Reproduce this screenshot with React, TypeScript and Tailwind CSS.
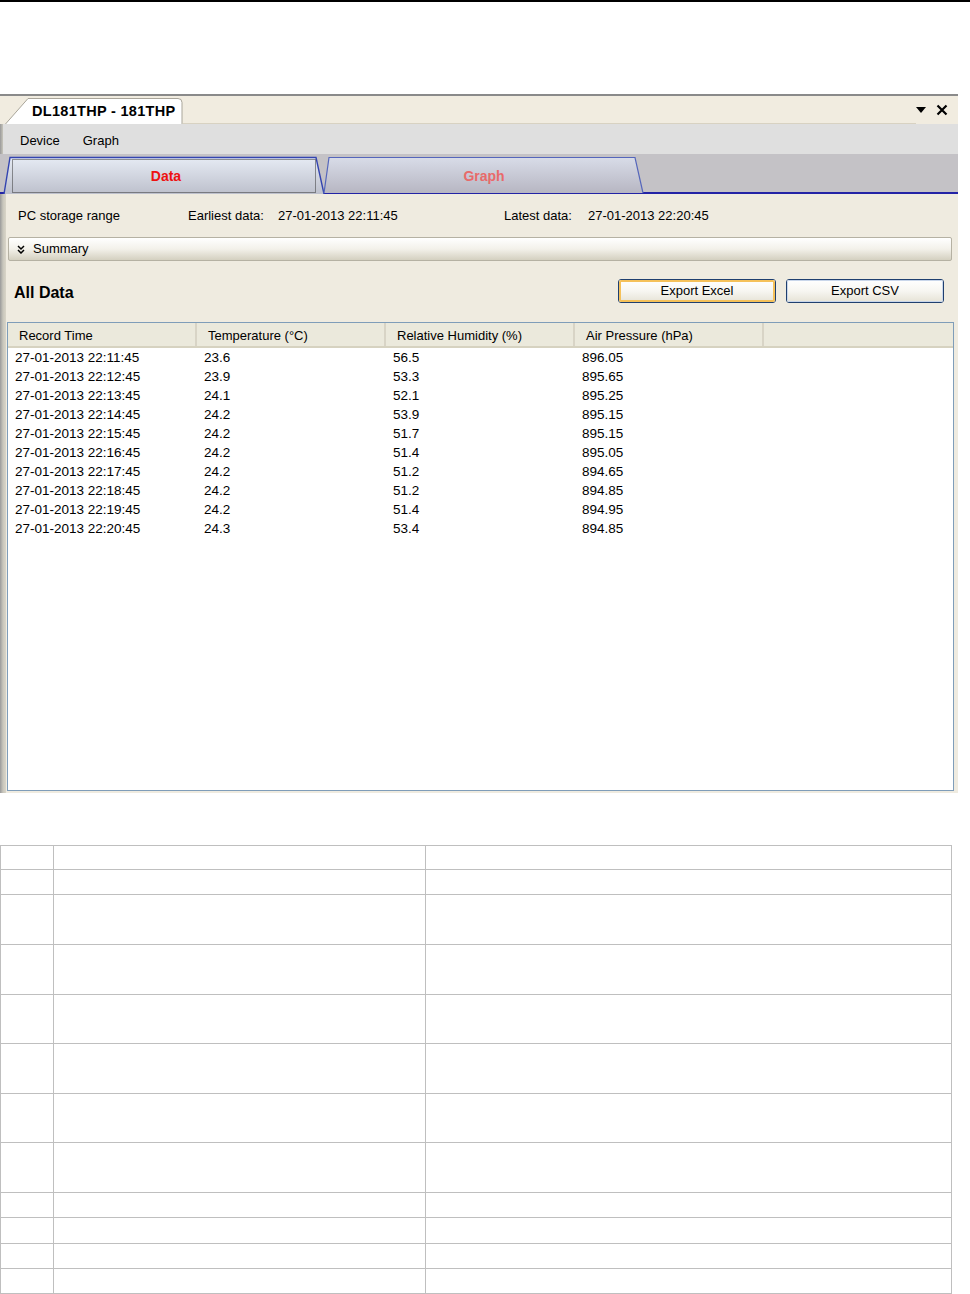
import React from "react";

const rows: [string, string, string, string][] = [
  ["27-01-2013 22:11:45", "23.6", "56.5", "896.05"],
  ["27-01-2013 22:12:45", "23.9", "53.3", "895.65"],
  ["27-01-2013 22:13:45", "24.1", "52.1", "895.25"],
  ["27-01-2013 22:14:45", "24.2", "53.9", "895.15"],
  ["27-01-2013 22:15:45", "24.2", "51.7", "895.15"],
  ["27-01-2013 22:16:45", "24.2", "51.4", "895.05"],
  ["27-01-2013 22:17:45", "24.2", "51.2", "894.65"],
  ["27-01-2013 22:18:45", "24.2", "51.2", "894.85"],
  ["27-01-2013 22:19:45", "24.2", "51.4", "894.95"],
  ["27-01-2013 22:20:45", "24.3", "53.4", "894.85"],
];

const headers = ["Record Time", "Temperature (°C)", "Relative Humidity (%)", "Air Pressure (hPa)"];

// heights of the empty table rows below the screenshot
const blankRows = [24, 25, 50, 50, 49, 50, 49, 50, 25, 26, 25, 25];

const font = "font-['Liberation_Sans',Arial,sans-serif]";

const XpButton: React.FC<{ label: string; focused?: boolean }> = ({ label, focused }) => (
  <button
    className={`h-[24px] w-[158px] rounded-[3px] border border-[#1f3f6f] p-0 text-[13px] text-black ${font}`}
  >
    <div
      className={`flex h-full w-full items-center justify-center rounded-[2px] bg-gradient-to-b from-white via-[#f7f6f1] to-[#e6e3d6] ${
        focused ? "shadow-[inset_0_0_0_2px_#f5c15a]" : "shadow-[inset_0_0_0_1px_#c9d6ea]"
      }`}
    >
      {label}
    </div>
  </button>
);

export default function App() {
  return (
    <div className={`w-[970px] min-h-[1294px] bg-white ${font}`}>
      <div className="h-[2px] bg-black" />
      <div className="h-[92px]" />

      {/* window */}
      <div className="flex w-[958px] flex-col">
        {/* document tab header */}
        <div className="flex h-[30px] items-end border-t-2 border-[#8a8a8a] bg-[#f1ece0] pl-[5px]">
          <div className="relative h-[26px] w-[178px]">
            <svg className="absolute inset-0" width="178" height="26" viewBox="0 0 178 26">
              <path d="M0.5 26 L23 0.5 L173 0.5 Q177 0.5 177 4.5 L177 26" fill="#ffffff" stroke="#a9a59a" />
            </svg>
            <div className="relative flex h-full items-center pl-[27px] pt-[1px] text-[14.5px] font-bold tracking-[0.3px] text-black">
              DL181THP - 181THP
            </div>
          </div>
          <div className="flex-1 self-stretch border-b border-[#d8d2c2]" />
          <div className="flex h-full items-center gap-[10px] pr-[10px]">
            <svg width="10" height="6" viewBox="0 0 10 6">
              <path d="M0 0 L10 0 L5 6 Z" fill="#000" />
            </svg>
            <svg width="12" height="12" viewBox="0 0 12 12">
              <path d="M1.5 1.5 L10.5 10.5 M10.5 1.5 L1.5 10.5" stroke="#000" strokeWidth="2.2" />
            </svg>
          </div>
        </div>

        <div className="flex">
          {/* left frame edge */}
          <div className="w-[6px] bg-gradient-to-r from-[#9a9a9a] via-[#c8c6bc] to-[#d9d5c8]" />

          <div className="flex w-[952px] flex-col">
            {/* menu bar */}
            <div className="-ml-[3px] flex h-[30px] items-center gap-[23px] bg-[#dfdfdf] pl-[17px] pt-[3px] text-[13px] text-black">
              <span>Device</span>
              <span>Graph</span>
            </div>

            {/* tab strip */}
            <div className="-ml-[6px] flex h-[40px] items-end border-b-2 border-[#2323a6] bg-[#c4c2c6] pl-[3px]">
              <div className="relative -mb-[2px] h-[38px] w-[322px]">
                <svg className="absolute inset-0" width="322" height="38" viewBox="0 0 322 38">
                  <defs>
                    <linearGradient id="tabA" x1="0" y1="0" x2="0" y2="1">
                      <stop offset="0" stopColor="#e6ebf4" />
                      <stop offset="1" stopColor="#bdc0cc" />
                    </linearGradient>
                  </defs>
                  <path d="M1 38 L7 1.5 L313 1.5 L321 38" fill="url(#tabA)" stroke="#3344b0" strokeWidth="1.4" />
                  <rect x="9.5" y="3.5" width="303" height="33" fill="none" stroke="#333" strokeDasharray="1 1" />
                </svg>
                <div className="relative flex h-full items-center justify-center pl-[4px] pt-[2px] text-[14px] font-bold text-[#ee1111]">
                  Data
                </div>
              </div>
              <div className="relative -mb-[2px] -ml-[2px] h-[38px] w-[322px]">
                <svg className="absolute inset-0" width="322" height="38" viewBox="0 0 322 38">
                  <defs>
                    <linearGradient id="tabB" x1="0" y1="0" x2="0" y2="1">
                      <stop offset="0" stopColor="#d8dce8" />
                      <stop offset="1" stopColor="#b7b6c2" />
                    </linearGradient>
                  </defs>
                  <path d="M1 37 L6 1.5 L312 1.5 L320 37" fill="url(#tabB)" stroke="#5566bb" strokeWidth="1.2" />
                </svg>
                <div className="relative flex h-full items-center justify-center pt-[2px] text-[14px] font-bold text-[#e86a6a]">
                  Graph
                </div>
              </div>
            </div>

            {/* content */}
            <div className="flex flex-col bg-[#efebe0] text-[13px] text-black">
              <div className="flex h-[43px] items-center pl-[12px] pt-[1px]">
                <span className="w-[170px]">PC storage range</span>
                <span className="w-[90px]">Earliest data:</span>
                <span className="w-[226px]">27-01-2013 22:11:45</span>
                <span className="w-[84px]">Latest data:</span>
                <span>27-01-2013 22:20:45</span>
              </div>

              <div className="ml-[2px] flex h-[24px] w-[944px] items-center gap-[8px] rounded-[2px] border border-[#b5b1a3] bg-gradient-to-b from-white via-[#f3f1ea] to-[#d4d0c0] pl-[8px]">
                <svg width="8" height="9" viewBox="0 0 8 9">
                  <path d="M1 1 L4 4 L7 1 M1 5 L4 8 L7 5" fill="none" stroke="#000" strokeWidth="1.5" />
                </svg>
                <span>Summary</span>
              </div>

              <div className="flex h-[61px] items-start justify-between pl-[8px] pr-[14px]">
                <span className="pt-[20px] text-[16px] font-bold">All Data</span>
                <div className="flex gap-[10px] pt-[18px]">
                  <XpButton label="Export Excel" focused />
                  <XpButton label="Export CSV" />
                </div>
              </div>

              {/* data grid */}
              <div className="ml-[1px] h-[469px] w-[947px] border border-[#7f9db9] bg-white">
                <div className="flex h-[25px] border-b-2 border-[#d6d2c0] bg-[#ebe9dc]">
                  {headers.map((h) => (
                    <div
                      key={h}
                      className="flex w-[189px] items-center border-r-2 border-[#d8d4c6] pl-[11px] pt-[3px] text-[13px]"
                    >
                      {h}
                    </div>
                  ))}
                </div>
                <div className="pt-[1px]">
                  {rows.map((r) => (
                    <div key={r[0]} className="flex h-[19px] items-center text-[13.5px]">
                      {r.map((c, i) => (
                        <div key={i} className="w-[189px] pl-[7px]">
                          {c}
                        </div>
                      ))}
                    </div>
                  ))}
                </div>
              </div>
              <div className="h-[2px]" />
            </div>
          </div>
        </div>
      </div>

      <div className="h-[52px]" />

      {/* empty table under the screenshot */}
      <table className="w-[952px] border-collapse">
        <tbody>
          {blankRows.map((h, i) => (
            <tr key={i} style={{ height: h }}>
              <td className="w-[53px] border border-[#bfbfbf]" />
              <td className="w-[372px] border border-[#bfbfbf]" />
              <td className="border border-[#bfbfbf]" />
            </tr>
          ))}
        </tbody>
      </table>
    </div>
  );
}
